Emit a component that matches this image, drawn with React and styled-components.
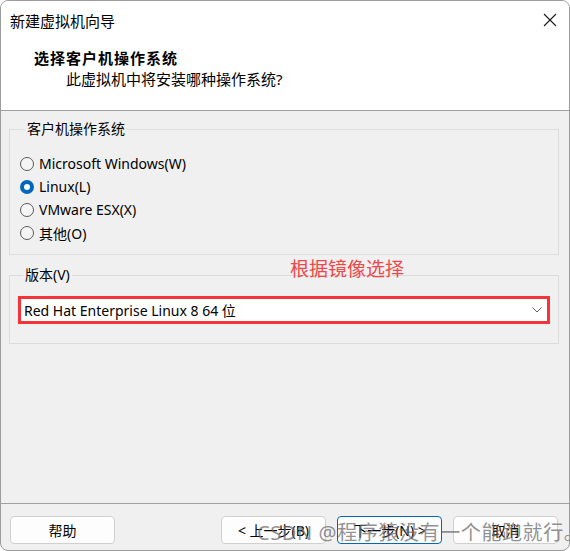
import React from "react"
import styled, { createGlobalStyle } from "styled-components"

const GlobalStyle = createGlobalStyle`
    * { box-sizing: border-box; }
    html, body {
        margin: 0;
        padding: 0;
        background: #ffffff;
    }
    body {
        font-family: "Noto Sans", "Noto Sans CJK SC", sans-serif;
        font-size: 14px;
        color: #000;
    }
`

const Window = styled.div`
    position: relative;
    width: 570px;
    height: 551px;
    border: 1px solid #9c9c9c;
    border-radius: 8px;
    overflow: hidden;
    display: flex;
    flex-direction: column;
    background: #f0f0f0;
`

const TitleBar = styled.div`
    height: 38px;
    display: flex;
    align-items: center;
    justify-content: space-between;
    padding: 0 12px 0 9px;
    background: #fff;
    font-size: 15px;
`

const CloseIcon = styled.svg`
    width: 14px;
    height: 14px;
`

const Header = styled.div`
    background: #fff;
    padding: 9px 0 21px 33px;
    border-bottom: 1px solid #a0a0a0;
`

const Heading = styled.div`
    font-weight: bold;
    font-size: 15px;
    letter-spacing: 1px;
    line-height: 20px;
`

const SubHeading = styled.div`
    margin-top: 1px;
    padding-left: 32px;
    font-size: 15px;
    line-height: 20px;
`

const Body = styled.div`
    flex: 1;
    padding: 0 10px 0 8px;
`

const Group = styled.fieldset`
    margin: ${p => p.$top}px 0 0;
    padding: ${p => p.$pad};
    border: 1px solid #dcdcdc;
    min-width: 0;
`

const Legend = styled.legend`
    margin-left: 5px;
    padding: 0 2px;
    font-size: 14px;
    line-height: 20px;
`

const RadioRow = styled.label`
    height: 23px;
    display: flex;
    align-items: center;
    gap: 5px;
    font-size: 14px;
`

const RadioDot = styled.span`
    width: 14px;
    height: 14px;
    border-radius: 50%;
    flex-shrink: 0;
    border: ${p => (p.$on ? "none" : "1px solid #5a5a5a")};
    background: ${p => (p.$on ? "#0067c0" : "#f5f5f5")};
    display: flex;
    align-items: center;
    justify-content: center;
    &::after {
        content: "";
        display: ${p => (p.$on ? "block" : "none")};
        width: 6px;
        height: 6px;
        border-radius: 50%;
        background: #fff;
    }
`

const Select = styled.div`
    height: 28px;
    border: 3px solid #f4343a;
    background: #fff;
    display: flex;
    align-items: center;
    justify-content: space-between;
    padding: 0 5px 0 3px;
    font-size: 14px;
`

const Chevron = styled.svg`
    width: 10px;
    height: 6px;
`

const Note = styled.div`
    position: absolute;
    left: 289px;
    top: 256px;
    color: #f0474a;
    font-size: 19px;
    line-height: 24px;
`

const Footer = styled.div`
    height: 47px;
    border-top: 1px solid #a0a0a0;
    display: flex;
    padding: 12px 11px 0 9px;
    gap: 11px;
`

const Button = styled.button`
    width: 105px;
    height: 28px;
    border: 1px solid ${p => (p.$primary ? "#0067c0" : "#d0d0d0")};
    border-radius: 4px;
    background: #fdfdfd;
    font-family: inherit;
    font-size: 14px;
    color: #000;
    padding: 0;
    margin-left: ${p => (p.$push ? "auto" : "0")};
`

const Watermark = styled.div`
    position: absolute;
    left: 256px;
    top: 519px;
    font-size: 20px;
    letter-spacing: 0.6px;
    line-height: 26px;
    color: rgba(110, 110, 110, 0.75);
    pointer-events: none;
    white-space: nowrap;
`

const systems = [
    { label: "Microsoft Windows(W)", on: false },
    { label: "Linux(L)", on: true },
    { label: "VMware ESX(X)", on: false },
    { label: "其他(O)", on: false },
]

const App = () => (
    <>
        <GlobalStyle />
        <Window>
            <TitleBar>
                <span>新建虚拟机向导</span>
                <CloseIcon viewBox="0 0 14 14">
                    <path d="M1 1 L13 13 M13 1 L1 13" stroke="#1a1a1a" strokeWidth="1.1" />
                </CloseIcon>
            </TitleBar>
            <Header>
                <Heading>选择客户机操作系统</Heading>
                <SubHeading>此虚拟机中将安装哪种操作系统?</SubHeading>
            </Header>
            <Body>
                <Group $top={8} $pad="13px 10px 10px">
                    <Legend>客户机操作系统</Legend>
                    {systems.map(s => (
                        <RadioRow key={s.label}>
                            <RadioDot $on={s.on} />
                            {s.label}
                        </RadioRow>
                    ))}
                </Group>
                <Group $top={10} $pad="11px 8px 19px">
                    <Legend>版本(V)</Legend>
                    <Select>
                        <span>Red Hat Enterprise Linux 8 64 位</span>
                        <Chevron viewBox="0 0 10 6">
                            <path d="M0.5 0.5 L5 5 L9.5 0.5" stroke="#606060" strokeWidth="1" fill="none" />
                        </Chevron>
                    </Select>
                </Group>
            </Body>
            <Note>根据镜像选择</Note>
            <Footer>
                <Button>帮助</Button>
                <Button $push>&lt; 上一步(B)</Button>
                <Button $primary>下一步(N) &gt;</Button>
                <Button>取消</Button>
            </Footer>
            <Watermark>CSDN @程序猿没有一个能跑就行。</Watermark>
        </Window>
    </>
)

export default App
